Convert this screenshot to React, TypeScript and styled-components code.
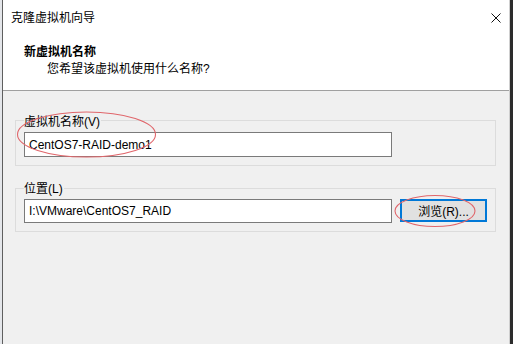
import React from 'react';
import styled, { createGlobalStyle } from 'styled-components';

const GlobalStyle = createGlobalStyle`
  html, body {
    margin: 0;
    padding: 0;
    background: #f0f0f0;
  }
  body {
    font-family: 'Liberation Sans', 'Noto Sans CJK SC', sans-serif;
    font-size: 12px;
    color: #000;
  }
`;

const Screen = styled.div`
  position: relative;
  display: flex;
  width: 513px;
  height: 344px;
  overflow: hidden;
`;

const BehindStrip = styled.div`
  width: 2px;
  background: #e4e6ea;
`;

const DarkStrip = styled.div`
  width: 3px;
  background: #2c2c2c;
`;

const Window = styled.div`
  flex: 1;
  display: flex;
  flex-direction: column;
  border-left: 1px solid #5f5f5f;
  border-right: 1px solid #cfcfcf;
  background: #f0f0f0;
`;

const Header = styled.header`
  height: 90px;
  background: #fff;
  border-bottom: 1px solid #a0a0a0;
`;

const TitleBar = styled.div`
  display: flex;
  align-items: center;
  justify-content: space-between;
  height: 35px;
  padding: 0 8px 0 8px;
  line-height: 16px;
`;

const Heading = styled.div`
  margin: 9px 0 0 21px;
  font-weight: bold;
  line-height: 16px;
`;

const SubHeading = styled.div`
  margin: 1px 0 0 44px;
  line-height: 16px;
`;

const Body = styled.div`
  display: flex;
  flex-direction: column;
  gap: 22px;
  padding: 29px 13px 0 12px;
`;

const GroupBox = styled.section`
  display: flex;
  flex-direction: column;
  gap: 2px;
  border: 1px solid #dcdcdc;
  padding: 0 8px 8px 8px;
`;

const GroupLabel = styled.div<{ $lift: number }>`
  align-self: flex-start;
  margin-top: ${(p) => -p.$lift}px;
  padding-right: 1px;
  background: #f0f0f0;
  line-height: 16px;
`;

const FieldRow = styled.div`
  display: flex;
  gap: 8px;
  align-items: flex-start;
`;

const TextBox = styled.div<{ $h: number }>`
  box-sizing: border-box;
  width: 368px;
  height: ${(p) => p.$h}px;
  display: flex;
  align-items: center;
  padding-left: 4px;
  background: #fff;
  border: 1px solid #7a7a7a;
  white-space: pre;
`;

const Button = styled.div`
  box-sizing: border-box;
  width: 87px;
  height: 23px;
  display: flex;
  align-items: center;
  justify-content: center;
  background: #e1e1e1;
  border: 2px solid #0078d7;
`;

const Annotations = styled.svg`
  position: absolute;
  left: 0;
  top: 0;
  pointer-events: none;
`;

const CloseIcon = () => (
  <svg width="10" height="10" viewBox="0 0 10 10">
    <path d="M0.5 0.5 L9.5 9.5 M9.5 0.5 L0.5 9.5" stroke="#111" strokeWidth="1" fill="none" />
  </svg>
);

export default function App() {
  return (
    <>
      <GlobalStyle />
      <Screen>
        <BehindStrip />
        <Window>
          <Header>
            <TitleBar>
              <span>克隆虚拟机向导</span>
              <CloseIcon />
            </TitleBar>
            <Heading>新虚拟机名称</Heading>
            <SubHeading>您希望该虚拟机使用什么名称?</SubHeading>
          </Header>
          <Body>
            <GroupBox>
              <GroupLabel $lift={7}>虚拟机名称(V)</GroupLabel>
              <TextBox $h={25}>CentOS7-RAID-demo1</TextBox>
            </GroupBox>
            <GroupBox>
              <GroupLabel $lift={8}>位置(L)</GroupLabel>
              <FieldRow>
                <TextBox $h={24}>I:\VMware\CentOS7_RAID</TextBox>
                <Button>浏览(R)...</Button>
              </FieldRow>
            </GroupBox>
          </Body>
        </Window>
        <DarkStrip />
        <Annotations width="513" height="344">
          <ellipse cx="86.5" cy="134.5" rx="69" ry="22.5" fill="none" stroke="#e0666b" strokeWidth="1.1" />
          <ellipse cx="435" cy="211" rx="40" ry="15.5" fill="none" stroke="#e0666b" strokeWidth="1.1" />
        </Annotations>
      </Screen>
    </>
  );
}
